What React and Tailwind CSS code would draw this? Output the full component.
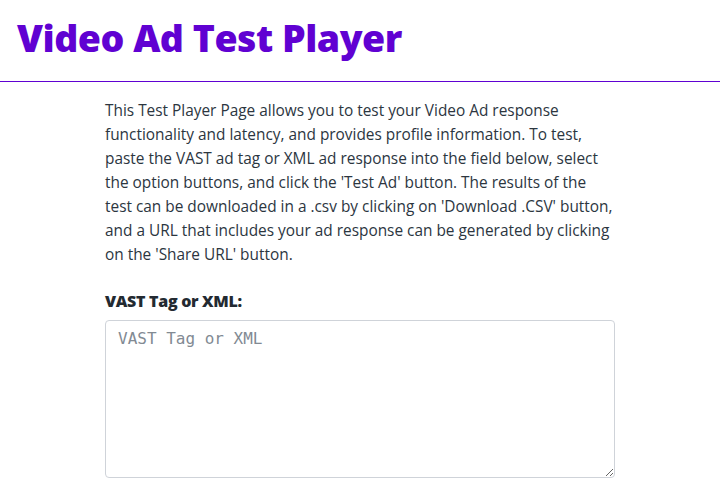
import React from "react";

const App = () => {
  return (
    <div className="min-h-screen bg-white" style={{ fontFamily: "'Open Sans', 'Noto Sans', sans-serif" }}>
      {/* Header */}
      <header className="h-[81px] px-[17px] pt-[12px]">
        <h1 className="text-[37.5px] leading-[52px] font-extrabold tracking-[-0.5px] text-[#6001d2]">
          Video Ad Test Player
        </h1>
      </header>
      <div className="h-px bg-[#6001d2]" />

      <main className="w-[510px] mx-auto pt-[17px]">
        <p className="text-[15.4px] leading-[24px] text-[#2c363f]">
          This Test Player Page allows you to test your Video Ad response
          <br />
          functionality and latency, and provides profile information. To test,
          <br />
          paste the VAST ad tag or XML ad response into the field below, select
          <br />
          the option buttons, and click the 'Test Ad' button. The results of the
          <br />
          test can be downloaded in a .csv by clicking on 'Download .CSV' button,
          <br />
          and a URL that includes your ad response can be generated by clicking
          <br />
          on the 'Share URL' button.
        </p>

        <label className="block mt-[24px] mb-[9px] text-[16px] leading-[20px] font-extrabold tracking-[-0.3px] text-[#232a31]">
          VAST Tag or XML:
        </label>
        <textarea
          placeholder="VAST Tag or XML"
          className="block w-full h-[158px] rounded-[4px] border border-[#cfd3d9] px-[12px] py-[8px] text-[16px] leading-[20px] text-[#232a31] placeholder:text-[#828a93] outline-none"
          style={{ fontFamily: "'DejaVu Sans Mono', monospace" }}
        />
      </main>
    </div>
  );
};

export default App;
